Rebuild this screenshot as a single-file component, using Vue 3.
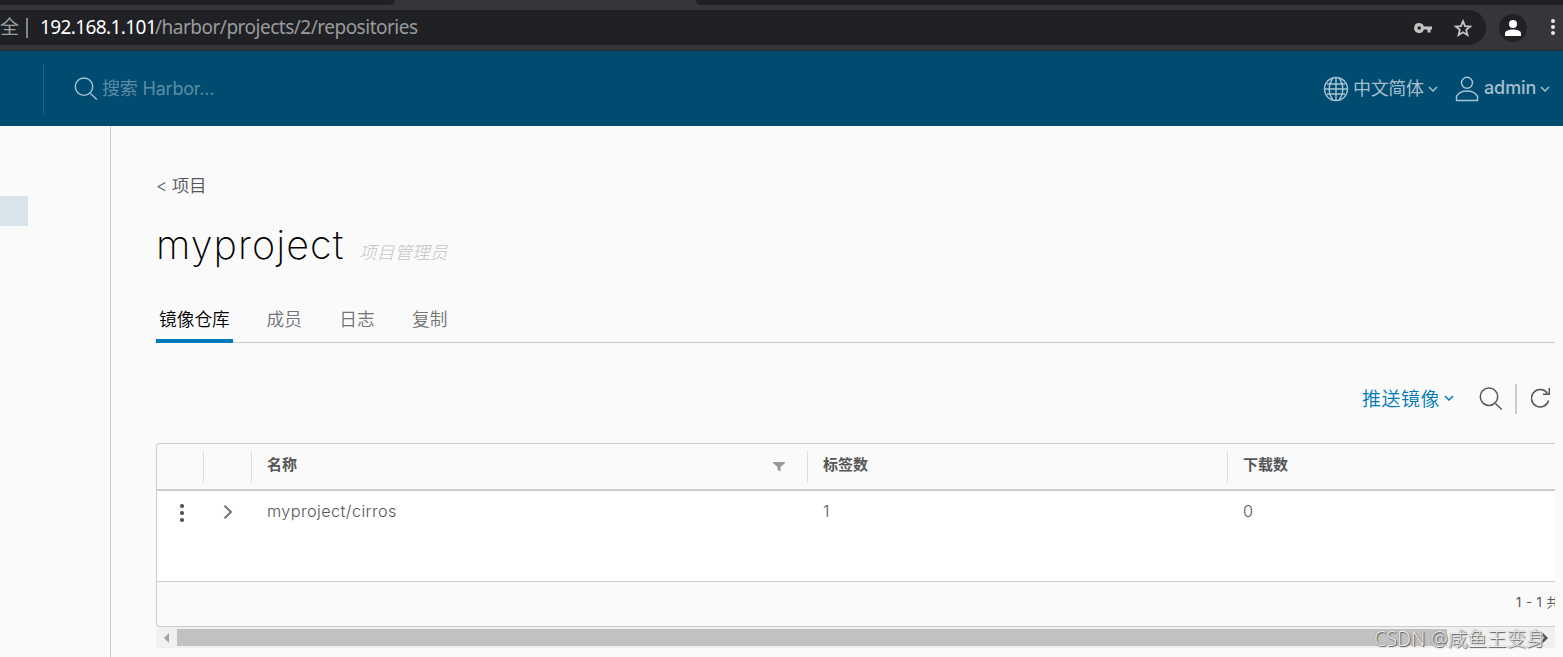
<template>
    <div class="window">
        <div class="tab-strip">
            <div class="tab-side left"></div>
            <div class="tab-side right"></div>
        </div>
        <div class="toolbar">
            <div class="omnibox">
                <span class="secure">全</span>
                <span class="secure-line"></span>
                <span class="host">192.168.1.101</span>
                <span class="path">/harbor/projects/2/repositories</span>
                <svg class="key" viewBox="0 0 18 12" width="18" height="12">
                    <path fill-rule="evenodd" d="M5.2 1a5 5 0 1 0 4.700 6.500H13.500V10.500h3V7.500H18V4.500H9.900A5 5 0 0 0 5.200 1zm0 3.200a1.800 1.800 0 1 1 0 3.600a1.800 1.800 0 0 1 0-3.600z" />
                </svg>
                <svg class="star" viewBox="0 0 18 18" width="18" height="18">
                    <path d="M9 2.200l2 4.900 5.200.4-4 3.400 1.300 5.100L9 13.200l-4.500 2.800 1.300-5.100-4-3.400 5.200-.4z" />
                </svg>
            </div>
            <div class="avatar">
                <svg viewBox="0 0 16 16" width="16" height="16">
                    <circle cx="8" cy="4" r="4" />
                    <path d="M0 16v-2.500C0 10.500 4.500 9.500 8 9.500s8 1 8 4V16z" />
                </svg>
            </div>
            <div class="dots"><i></i><i></i><i></i></div>
        </div>

        <header class="header">
            <div class="search">
                <svg viewBox="0 0 24 24" width="24" height="24">
                    <circle cx="10" cy="9.700" r="8.700" />
                    <path d="M16.500 16.500l6.300 6" />
                </svg>
                <span>搜索 Harbor...</span>
            </div>
            <div class="language">
                <svg viewBox="0 0 26 26" width="26" height="26">
                    <circle cx="13" cy="13" r="11.500" />
                    <path d="M13 1.500v23M1.500 13h23M4 8h18M4 18h18M10 2C5 8.500 5 17.500 10 24M16 2c5 6.500 5 15.500 0 22" />
                </svg>
                <span class="header-label">中文简体</span>
                <svg class="caret" viewBox="0 0 10 6" width="10" height="6"><path d="M1 1l4 4 4-4" /></svg>
            </div>
            <div class="user">
                <svg viewBox="0 0 24 26" width="24" height="26">
                    <circle cx="12" cy="6.800" r="5.500" />
                    <path d="M1.500 24.500v-4.200C3.500 16.800 7.500 15 12 15s8.500 1.800 10.500 5.300v4.200z" />
                </svg>
                <span class="header-label admin">admin</span>
                <svg class="caret" viewBox="0 0 10 6" width="10" height="6"><path d="M1 1l4 4 4-4" /></svg>
            </div>
        </header>

        <div class="body">
            <aside class="sidenav">
                <div class="nav-active"></div>
            </aside>
            <main class="content">
                <a class="back">&lt; 项目</a>
                <div class="title">
                    <h1>myproject</h1>
                    <em>项目管理员</em>
                </div>
                <nav class="tabs">
                    <span v-for="tab in tabs" :key="tab" class="tab" :class="{ active: tab === activeTab }">{{ tab }}</span>
                </nav>
                <div class="actions">
                    <span class="push">推送镜像</span>
                    <svg class="push-caret" viewBox="0 0 10 6" width="10" height="6"><path d="M1 1l4 4 4-4" /></svg>
                    <svg class="find" viewBox="0 0 24 24" width="24" height="24">
                        <circle cx="10" cy="9.700" r="8.700" />
                        <path d="M16.500 16.500l6.300 6" />
                    </svg>
                    <span class="separator"></span>
                    <svg class="refresh" viewBox="0 0 20 22" width="20" height="22">
                        <path d="M17.600 13.500A8.700 8.700 0 1 1 16.300 6.200M18.300 1v6.200H12" />
                    </svg>
                </div>
                <div class="datagrid">
                    <div class="row head">
                        <div class="cell"></div>
                        <div class="cell"></div>
                        <div class="cell name">
                            名称
                            <svg viewBox="0 0 12 10" width="12" height="10"><path d="M0 0h12v1L7.500 5v4.500l-3-1.500V5L0 1z" /></svg>
                        </div>
                        <div class="cell">标签数</div>
                        <div class="cell">下载数</div>
                    </div>
                    <div v-for="repo in repositories" :key="repo.name" class="row item">
                        <div class="cell menu"><i></i><i></i><i></i></div>
                        <div class="cell expand">
                            <svg viewBox="0 0 10 16" width="10" height="16"><path d="M1.500 1.700L8 8l-6.500 6.300" /></svg>
                        </div>
                        <div class="cell repo">{{ repo.name }}</div>
                        <div class="cell">{{ repo.tags }}</div>
                        <div class="cell">{{ repo.pulls }}</div>
                    </div>
                    <div class="foot"><span>1 - 1 共</span></div>
                </div>
                <div class="scrollbar">
                    <svg viewBox="0 0 5 10" width="5" height="10"><path d="M5 0v10L0 5z" /></svg>
                    <div class="thumb"></div>
                    <svg class="end" viewBox="0 0 5 10" width="5" height="10"><path d="M0 0v10l5-5z" /></svg>
                </div>
            </main>
        </div>
        <div class="watermark">CSDN @咸鱼王变身</div>
    </div>
</template>

<script setup>
import { ref } from 'vue'

const tabs = ['镜像仓库', '成员', '日志', '复制']
const activeTab = ref('镜像仓库')

const repositories = ref([
    { name: 'myproject/cirros', tags: 1, pulls: 0 },
])
</script>

<style>
body {
    margin: 0;
    overflow: hidden;
}
</style>

<style scoped>
* {
    box-sizing: border-box;
}

.window {
    position: relative;
    width: 1563px;
    height: 657px;
    overflow: hidden;
    display: flex;
    flex-direction: column;
    background: #fafafa;
    font-family: Inter, "Noto Sans CJK SC", sans-serif;
    color: #565656;
}

svg {
    display: block;
    flex: none;
}

span {
    white-space: nowrap;
}

.tab-strip {
    height: 5px;
    flex: none;
    display: flex;
    justify-content: space-between;
    background: #35363a;
}

.tab-side {
    background: #202124;
}

.tab-side.left {
    width: 395px;
    border-bottom-right-radius: 7px;
}

.tab-side.right {
    width: 867px;
    border-bottom-left-radius: 7px;
}

.toolbar {
    height: 46px;
    flex: none;
    display: flex;
    align-items: flex-start;
    padding-top: 5px;
    background: #35363a;
    border-bottom: 1px solid #28292c;
}

.omnibox {
    width: 1486px;
    height: 35px;
    display: flex;
    align-items: center;
    background: #202124;
    border-radius: 0 18px 18px 0;
    font-family: "Noto Sans", "Noto Sans CJK SC", sans-serif;
    font-size: 19px;
    line-height: 26px;
    color: #9aa0a6;
}

.omnibox span:not(.secure-line) {
    padding-bottom: 1px;
}

.secure {
    width: 26px;
}

.secure-line {
    width: 2px;
    height: 20px;
    margin-right: 12px;
    background: #80868b;
}

.host {
    width: 115px;
    color: #fff;
    letter-spacing: -0.6px;
}

.path {
    color: #9a9b9d;
    letter-spacing: -0.5px;
}

.key {
    margin-left: auto;
    fill: #c4c4c4;
}

.star {
    margin: 0 14px 0 22px;
    fill: none;
    stroke: #c4c4c4;
    stroke-width: 1.8;
}

.avatar {
    width: 28px;
    height: 28px;
    margin: 4px 0 0 13px;
    display: flex;
    align-items: center;
    justify-content: center;
    border-radius: 50%;
    background: #202124;
    fill: #fff;
}

.dots {
    margin: 9px 0 0 24px;
    display: flex;
    flex-direction: column;
    gap: 2px;
}

.dots i {
    width: 4px;
    height: 4px;
    border-radius: 50%;
    background: #e8e8e8;
}

.header {
    height: 75px;
    flex: none;
    display: flex;
    align-items: center;
    padding-left: 43px;
    background: #004b70;
    color: #a5bfce;
}

.header svg {
    fill: none;
    stroke: #a9c5d3;
    stroke-width: 1.4;
}

.header span {
    padding-bottom: 3px;
}

.search {
    height: 50px;
    flex: 1;
    display: flex;
    align-items: center;
    gap: 4px;
    padding-left: 30px;
    border-left: 1px solid #1d6081;
    font-size: 18px;
    letter-spacing: -0.2px;
    color: #5d8ca6;
}

.language,
.user {
    display: flex;
    align-items: center;
}

.language {
    width: 132px;
}

.user {
    width: 108px;
}

.header-label {
    width: 75px;
    margin-left: 4px;
    font-size: 18px;
    font-weight: 400;
    letter-spacing: -0.35px;
}

.header-label.admin {
    width: 56px;
    margin-left: 5px;
    font-weight: 500;
    letter-spacing: -0.1px;
}

.body {
    flex: 1;
    display: flex;
}

.sidenav {
    width: 111px;
    padding-top: 70px;
    border-right: 1px solid #ccc;
}

.nav-active {
    width: 28px;
    height: 30px;
    background: #d9e4ea;
}

.content {
    width: 1444px;
    padding: 46px 0 0 45px;
    overflow: hidden;
}

.back {
    display: block;
    height: 28px;
    line-height: 28px;
    font-size: 17.5px;
    font-weight: 350;
    letter-spacing: -0.3px;
}

.title {
    height: 90px;
    display: flex;
    align-items: baseline;
    padding-top: 14px;
}

.title h1 {
    width: 203px;
    margin: 0;
    line-height: 62px;
    font-size: 39.5px;
    font-weight: 250;
    letter-spacing: 1.1px;
    color: #000;
}

.title em {
    font-size: 17.7px;
    font-weight: 300;
    color: #c4c4c4;
}

.tabs {
    height: 53px;
    display: flex;
    gap: 30px;
    border-bottom: 1px solid #ccc;
    font-size: 17.700px;
    font-weight: 350;
    color: #737373;
}

.tab {
    height: 53px;
    padding: 0 3px;
    line-height: 59px;
}

.tab + .tab {
    padding: 0 3.700px;
}

.tab.active {
    color: #000;
    border-bottom: 4px solid #0079b8;
}

.actions {
    height: 100px;
    display: flex;
    align-items: center;
    justify-content: flex-end;
    padding: 12px 4px 0 0;
    color: #0079b8;
}

.actions svg {
    fill: none;
    stroke: #565656;
    stroke-width: 1.5;
}

.push {
    margin-right: 4px;
    padding-bottom: 3px;
    font-size: 19px;
    font-weight: 350;
    letter-spacing: 0.5px;
}

.actions .push-caret {
    margin-bottom: 2px;
    stroke: #0079b8;
}

.find {
    margin-left: 25px;
}

.actions .refresh {
    margin-bottom: 2px;
}

.separator {
    width: 2px;
    height: 30px;
    margin: 0 14px 0 12px;
    background: #ccc;
}

.datagrid {
    height: 184px;
    border: 1px solid #ccc;
    border-right: 0;
    border-radius: 4px 0 0 4px;
}

.row {
    display: grid;
    grid-template-columns: 46px 48px 556px 420px 1fr;
}

.cell {
    padding-left: 16px;
}

.head {
    height: 47px;
    align-items: center;
    border-bottom: 2px solid #ccc;
    font-size: 15px;
    font-weight: 600;
}

.head .cell {
    height: 32px;
    padding-left: 15px;
    line-height: 28px;
}

.head .cell + .cell {
    border-left: 1px solid #ddd;
}

.head .name {
    display: flex;
    justify-content: space-between;
    padding-right: 22px;
}

.name svg {
    margin-top: 11px;
    fill: #999;
}

.item {
    height: 90px;
    background: #fff;
    font-size: 16.300px;
    font-weight: 300;
    line-height: 41px;
}

.repo {
    letter-spacing: 0.4px;
}

.menu {
    display: flex;
    flex-direction: column;
    gap: 3.500px;
    padding: 13px 0 0 23px;
}

.menu i {
    width: 3.500px;
    height: 3.500px;
    border-radius: 50%;
    background: #565656;
}

.expand {
    padding: 13px 0 0 20px;
}

.expand svg {
    fill: none;
    stroke: #737373;
    stroke-width: 2;
}

.foot {
    height: 45px;
    border-top: 1px solid #ccc;
    padding-left: 1359px;
    overflow: hidden;
    font-size: 13px;
    line-height: 40px;
    word-spacing: 1px;
}

.scrollbar {
    height: 21px;
    display: flex;
    align-items: center;
    padding: 0 7px 0 8px;
    background: #f0f0f0;
    fill: #a3a3a3;
}

.thumb {
    width: 1270px;
    height: 17px;
    margin-left: 8px;
    background: #c1c1c1;
}

.scrollbar .end {
    margin-left: auto;
    fill: #505050;
}

.watermark {
    position: absolute;
    left: 1374px;
    top: 625px;
    font-family: "Noto Sans", "Noto Sans CJK SC", sans-serif;
    font-size: 19.500px;
    font-weight: 300;
    line-height: 27px;
    letter-spacing: 0.1px;
    color: #eee;
    text-shadow: 1px 1px 1px #555, 0 0 1px #777;
    white-space: nowrap;
}
</style>
